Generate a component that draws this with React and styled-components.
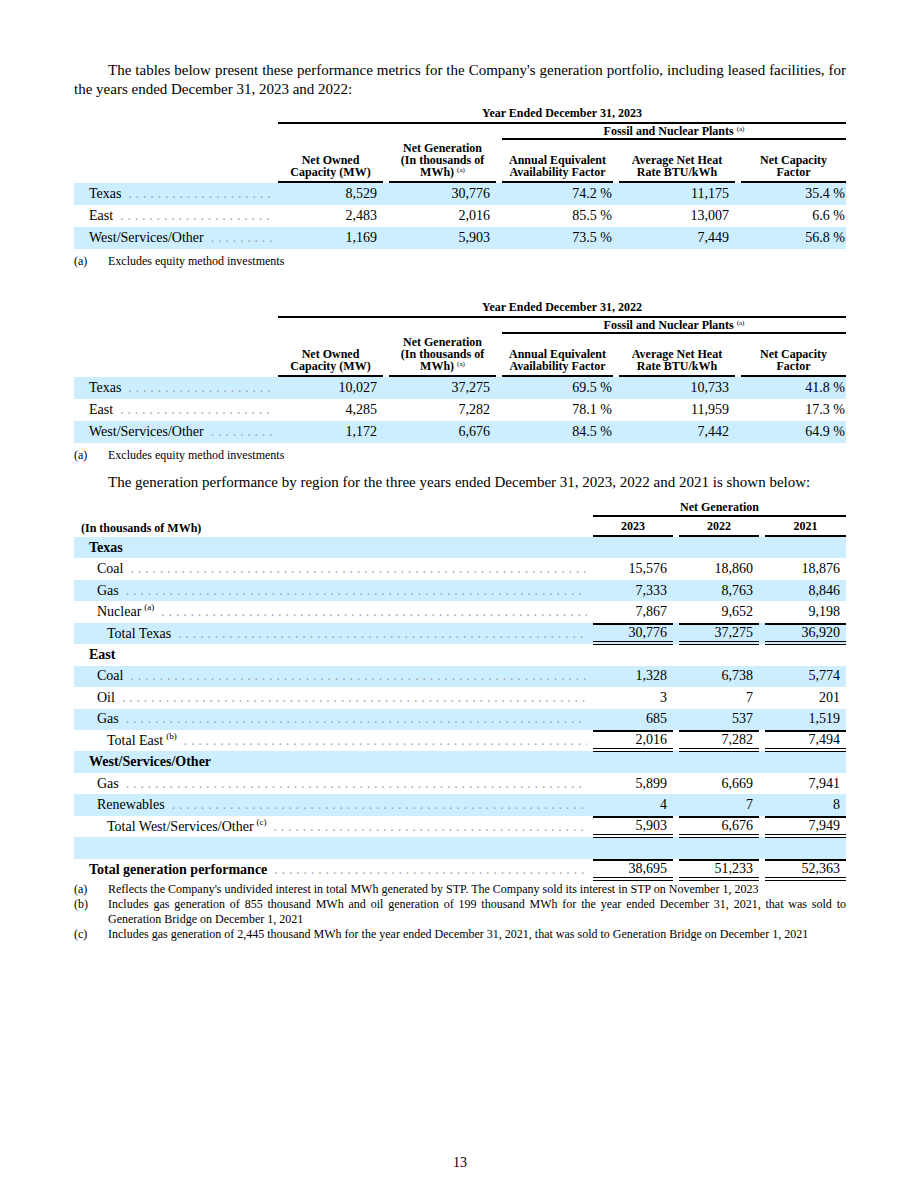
import React from 'react'
import styled, { createGlobalStyle } from 'styled-components'

const BAND = '#cceeff'

const GlobalStyle = createGlobalStyle`
  html, body {
    margin: 0;
    padding: 0;
    background: #ffffff;
  }
  body {
    font-family: "Liberation Serif", "Times New Roman", serif;
    color: #000000;
  }
`

const Page = styled.div`
  width: 920px;
  min-height: 1191px;
  box-sizing: border-box;
  padding: 61px 74px 0 74px;
  display: flex;
  flex-direction: column;
`

const Para = styled.div`
  margin: ${p => p.$top || 0}px 0 0 0;
  font-size: 15px;
  line-height: 19px;
`

const Line = styled.span`
  display: block;
  text-indent: ${p => (p.$first ? 34 : 0)}px;
  text-align: ${p => (p.$full ? 'justify' : 'left')};
  text-align-last: ${p => (p.$full ? 'justify' : 'auto')};
  white-space: ${p => (p.$full ? 'nowrap' : 'normal')};
`

const Block = styled.section`
  margin-top: ${p => p.$top || 0}px;
`

const Row = styled.div`
  display: grid;
  grid-template-columns: ${p => p.$cols};
  column-gap: 6px;
  height: ${p => p.$h}px;
  background: ${p => (p.$band ? BAND : 'transparent')};
  font-size: 14px;
`

const SpanHead = styled.div`
  grid-column: ${p => p.$span};
  align-self: end;
  text-align: center;
  font-size: 12px;
  font-weight: bold;
  line-height: 14px;
  padding-bottom: ${p => p.$pad || 0}px;
  border-bottom: 2px solid #000;
`

const ColHead = styled.div`
  align-self: end;
  text-align: ${p => (p.$left ? 'left' : 'center')};
  padding-left: ${p => p.$indent || 0}px;
  font-size: 12px;
  font-weight: bold;
  line-height: 12px;
  padding-bottom: ${p => p.$pad || 0}px;
  border-bottom: ${p => (p.$line ? '2px solid #000' : 'none')};
`

const Label = styled.div`
  display: flex;
  align-items: baseline;
  align-self: center;
  min-width: 0;
  padding-left: ${p => p.$indent || 0}px;
  font-weight: ${p => (p.$bold ? 'bold' : 'normal')};
  line-height: 16px;
  white-space: nowrap;
`

const LabelText = styled.span`
  flex: none;
`

const Leader = styled.span`
  flex: 1;
  min-width: 0;
  overflow: hidden;
  white-space: nowrap;
  margin-left: 7px;
  color: #a6a6a6;
  font-weight: normal;
  letter-spacing: 3.8px;
  &::before {
    content: '${'.'.repeat(160)}';
  }
`

const Num = styled.div`
  display: flex;
  align-items: center;
  justify-content: flex-end;
  box-sizing: border-box;
  height: 100%;
  padding-right: ${p => (p.$pct ? 1 : 6)}px;
  border-top: ${p => (p.$over ? '2px solid #000' : 'none')};
  border-bottom: ${p => (p.$double ? '4px double #000' : 'none')};
`

const Sup = styled.sup`
  font-size: ${p => p.$size || 9}px;
  line-height: 0;
  vertical-align: ${p => p.$raise || 6}px;
  margin-left: 3px;
  font-weight: normal;
`

const Notes = styled.div`
  margin-top: ${p => p.$top || 0}px;
  font-size: 12px;
  line-height: 15px;
`

const Note = styled.div`
  display: grid;
  grid-template-columns: 34px 1fr;
  text-align: justify;
`

const PageNumber = styled.div`
  margin-top: auto;
  padding-bottom: 19px;
  text-align: center;
  font-size: 14px;
  line-height: 19px;
`

const METRIC_COLS = '198px 105px 107px 111px 116px 105px'
const GEN_COLS = '513px 80px 80px 81px'

const metrics = [
  {
    year: '2023',
    top: 7,
    rows: [
      ['Texas', '8,529', '30,776', '74.2 %', '11,175', '35.4 %'],
      ['East', '2,483', '2,016', '85.5 %', '13,007', '6.6 %'],
      ['West/Services/Other', '1,169', '5,903', '73.5 %', '7,449', '56.8 %'],
    ],
  },
  {
    year: '2022',
    top: 31,
    rows: [
      ['Texas', '10,027', '37,275', '69.5 %', '10,733', '41.8 %'],
      ['East', '4,285', '7,282', '78.1 %', '11,959', '17.3 %'],
      ['West/Services/Other', '1,172', '6,676', '84.5 %', '7,442', '64.9 %'],
    ],
  },
]

const generation = [
  { label: 'Texas', kind: 'group' },
  { label: 'Coal', vals: ['15,576', '18,860', '18,876'] },
  { label: 'Gas', vals: ['7,333', '8,763', '8,846'] },
  { label: 'Nuclear', sup: '(a)', vals: ['7,867', '9,652', '9,198'] },
  { label: 'Total Texas', kind: 'total', vals: ['30,776', '37,275', '36,920'] },
  { label: 'East', kind: 'group' },
  { label: 'Coal', vals: ['1,328', '6,738', '5,774'] },
  { label: 'Oil', vals: ['3', '7', '201'] },
  { label: 'Gas', vals: ['685', '537', '1,519'] },
  { label: 'Total East', sup: '(b)', kind: 'total', vals: ['2,016', '7,282', '7,494'] },
  { label: 'West/Services/Other', kind: 'group' },
  { label: 'Gas', vals: ['5,899', '6,669', '7,941'] },
  { label: 'Renewables', vals: ['4', '7', '8'] },
  { label: 'Total West/Services/Other', sup: '(c)', kind: 'total', vals: ['5,903', '6,676', '7,949'] },
  { kind: 'blank' },
  { label: 'Total generation performance', kind: 'grand', vals: ['38,695', '51,233', '52,363'] },
]

const indentFor = kind => {
  if (kind === 'group' || kind === 'grand') return 15
  if (kind === 'total') return 33
  return 23
}

const MetricsTable = ({ year, top, rows }) => (
  <Block $top={top}>
    <Row $cols={METRIC_COLS} $h={18}>
      <div />
      <SpanHead $span="2 / -1" $pad={2}>Year Ended December 31, {year}</SpanHead>
    </Row>
    <Row $cols={METRIC_COLS} $h={16}>
      <div />
      <SpanHead $span="4 / -1">
        Fossil and Nuclear Plants<Sup $size={7} $raise={4}>(a)</Sup>
      </SpanHead>
    </Row>
    <Row $cols={METRIC_COLS} $h={43}>
      <div />
      <ColHead $line $pad={3}>Net Owned<br />Capacity (MW)</ColHead>
      <ColHead $line $pad={3}>
        Net Generation<br />(In thousands of<br />MWh)<Sup $size={7} $raise={4}>(a)</Sup>
      </ColHead>
      <ColHead $line $pad={3}>Annual Equivalent<br />Availability Factor</ColHead>
      <ColHead $line $pad={3}>Average Net Heat<br />Rate BTU/kWh</ColHead>
      <ColHead $line $pad={3}>Net Capacity<br />Factor</ColHead>
    </Row>
    {rows.map(([name, ...vals], i) => (
      <Row key={name} $cols={METRIC_COLS} $h={22} $band={i % 2 === 0}>
        <Label $indent={15}>
          <LabelText>{name}</LabelText>
          <Leader />
        </Label>
        {vals.map((v, j) => (
          <Num key={j} $pct={v.includes('%')}>{v}</Num>
        ))}
      </Row>
    ))}
    <Notes $top={5}>
      <Note>
        <span>(a)</span>
        <span>Excludes equity method investments</span>
      </Note>
    </Notes>
  </Block>
)

const GenerationTable = () => (
  <Block $top={8}>
    <Row $cols={GEN_COLS} $h={17}>
      <div />
      <SpanHead $span="2 / -1" $pad={1}>Net Generation</SpanHead>
    </Row>
    <Row $cols={GEN_COLS} $h={20}>
      <ColHead $left $indent={7} $pad={3}>(In thousands of MWh)</ColHead>
      <ColHead $line $pad={3}>2023</ColHead>
      <ColHead $line $pad={3}>2022</ColHead>
      <ColHead $line $pad={3}>2021</ColHead>
    </Row>
    {generation.map((r, i) => {
      const band = i % 2 === 0
      if (r.kind === 'blank') {
        return <Row key={i} $cols={GEN_COLS} $h={21.45} $band={band} />
      }
      const isGroup = r.kind === 'group'
      const bold = isGroup || r.kind === 'grand'
      const isTotal = r.kind === 'total' || r.kind === 'grand'
      return (
        <Row key={i} $cols={GEN_COLS} $h={21.45} $band={band}>
          <Label $indent={indentFor(r.kind)} $bold={bold}>
            <LabelText>
              {r.label}
              {r.sup && <Sup>{r.sup}</Sup>}
            </LabelText>
            {!isGroup && <Leader />}
          </Label>
          {!isGroup &&
            r.vals.map((v, j) => (
              <Num key={j} $over={isTotal} $double={isTotal}>{v}</Num>
            ))}
        </Row>
      )
    })}
    <Notes $top={2}>
      <Note>
        <span>(a)</span>
        <span>Reflects the Company's undivided interest in total MWh generated by STP. The Company sold its interest in STP on November 1, 2023</span>
      </Note>
      <Note>
        <span>(b)</span>
        <span>Includes gas generation of 855 thousand MWh and oil generation of 199 thousand MWh for the year ended December 31, 2021, that was sold to Generation Bridge on December 1, 2021</span>
      </Note>
      <Note>
        <span>(c)</span>
        <span>Includes gas generation of 2,445 thousand MWh for the year ended December 31, 2021, that was sold to Generation Bridge on December 1, 2021</span>
      </Note>
    </Notes>
  </Block>
)

export default function App() {
  return (
    <>
      <GlobalStyle />
      <Page>
        <Para>
          <Line $first $full>
            The tables below present these performance metrics for the Company's generation portfolio, including leased facilities, for
          </Line>
          <Line>the years ended December 31, 2023 and 2022:</Line>
        </Para>
        {metrics.map(m => (
          <MetricsTable key={m.year} {...m} />
        ))}
        <Para $top={10}>
          <Line $first>
            The generation performance by region for the three years ended December 31, 2023, 2022 and 2021 is shown below:
          </Line>
        </Para>
        <GenerationTable />
        <PageNumber>13</PageNumber>
      </Page>
    </>
  )
}
